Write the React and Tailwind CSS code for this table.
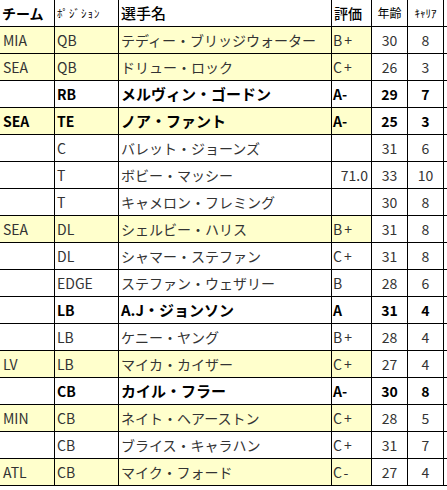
const rows = [
  { team: "MIA", pos: "QB", name: "テディー・ブリッジウォーター", grade: "B+", age: 30, car: 8, hl: true },
  { team: "SEA", pos: "QB", name: "ドリュー・ロック", grade: "C+", age: 26, car: 3, hl: true },
  { team: "", pos: "RB", name: "メルヴィン・ゴードン", grade: "A-", age: 29, car: 7, bold: true },
  { team: "SEA", pos: "TE", name: "ノア・ファント", grade: "A-", age: 25, car: 3, bold: true, hl: true },
  { team: "", pos: "C", name: "バレット・ジョーンズ", grade: "", age: 31, car: 6 },
  { team: "", pos: "T", name: "ボビー・マッシー", grade: "71.0", age: 33, car: 10, num: true },
  { team: "", pos: "T", name: "キャメロン・フレミング", grade: "", age: 30, car: 8 },
  { team: "SEA", pos: "DL", name: "シェルビー・ハリス", grade: "B+", age: 31, car: 8, hl: true },
  { team: "", pos: "DL", name: "シャマー・ステファン", grade: "C+", age: 31, car: 8 },
  { team: "", pos: "EDGE", name: "ステファン・ウェザリー", grade: "B", age: 28, car: 6 },
  { team: "", pos: "LB", name: "A.J・ジョンソン", grade: "A", age: 31, car: 4, bold: true },
  { team: "", pos: "LB", name: "ケニー・ヤング", grade: "B+", age: 28, car: 4 },
  { team: "LV", pos: "LB", name: "マイカ・カイザー", grade: "C+", age: 27, car: 4, hl: true },
  { team: "", pos: "CB", name: "カイル・フラー", grade: "A-", age: 30, car: 8, bold: true },
  { team: "MIN", pos: "CB", name: "ネイト・ヘアーストン", grade: "C+", age: 28, car: 5, hl: true },
  { team: "", pos: "CB", name: "ブライス・キャラハン", grade: "C+", age: 31, car: 7 },
  { team: "ATL", pos: "CB", name: "マイク・フォード", grade: "C-", age: 27, car: 4, hl: true },
];

const font = { fontFamily: '"Noto Sans CJK JP", "Liberation Sans", sans-serif' };

function Row({ r }) {
  const bg = r.hl ? "bg-[#ffffcc]" : "bg-white";
  const txt = r.bold ? "font-bold text-black" : "text-[#333]";
  const gradeCls = r.num
    ? "pr-[3px] text-right bg-white"
    : r.bold
    ? "pl-[1px] " + bg
    : "pl-[1px] tracking-[2px] " + bg;
  return (
    <div className={`flex h-[27px] border-b border-black text-[14px] leading-[26px] ${txt}`}>
      <div className={`w-[55px] shrink-0 border-r border-black pl-[3px] ${bg}`}>{r.team}</div>
      <div className={`w-[64px] shrink-0 border-r border-black pl-[2px] ${bg}`}>{r.pos}</div>
      <div className={`w-[213px] shrink-0 border-r border-black pl-[2px] ${bg} ${r.bold ? "text-[15px]" : ""}`}>{r.name}</div>
      <div className={`w-[40px] shrink-0 border-r border-black ${gradeCls}`}>{r.grade}</div>
      <div className="w-[36px] shrink-0 border-r border-black text-center">{r.age}</div>
      <div className="w-[36px] shrink-0 border-r border-black text-center">{r.car}</div>
    </div>
  );
}

export default function App() {
  return (
    <div className="w-[447px] h-[490px] bg-white" style={font}>
      <div className="flex h-[27px] border-b border-black text-black leading-[26px]">
        <div className="w-[55px] shrink-0 border-r border-black pl-[2px] text-[14px] font-bold">チーム</div>
        <div className="w-[64px] shrink-0 border-r border-black pl-[2px] text-[11px] tracking-[1px]">ﾎﾟｼﾞｼｮﾝ</div>
        <div className="w-[213px] shrink-0 border-r border-black pl-[2px] text-[15px] font-medium">選手名</div>
        <div className="w-[40px] shrink-0 border-r border-black pl-[2px] text-[14px] font-medium">評価</div>
        <div className="w-[36px] shrink-0 border-r border-black text-center text-[12px]">年齢</div>
        <div className="w-[36px] shrink-0 border-r border-black text-center text-[11px]">ｷｬﾘｱ</div>
      </div>
      {rows.map((r, i) => (
        <Row key={i} r={r} />
      ))}
    </div>
  );
}
